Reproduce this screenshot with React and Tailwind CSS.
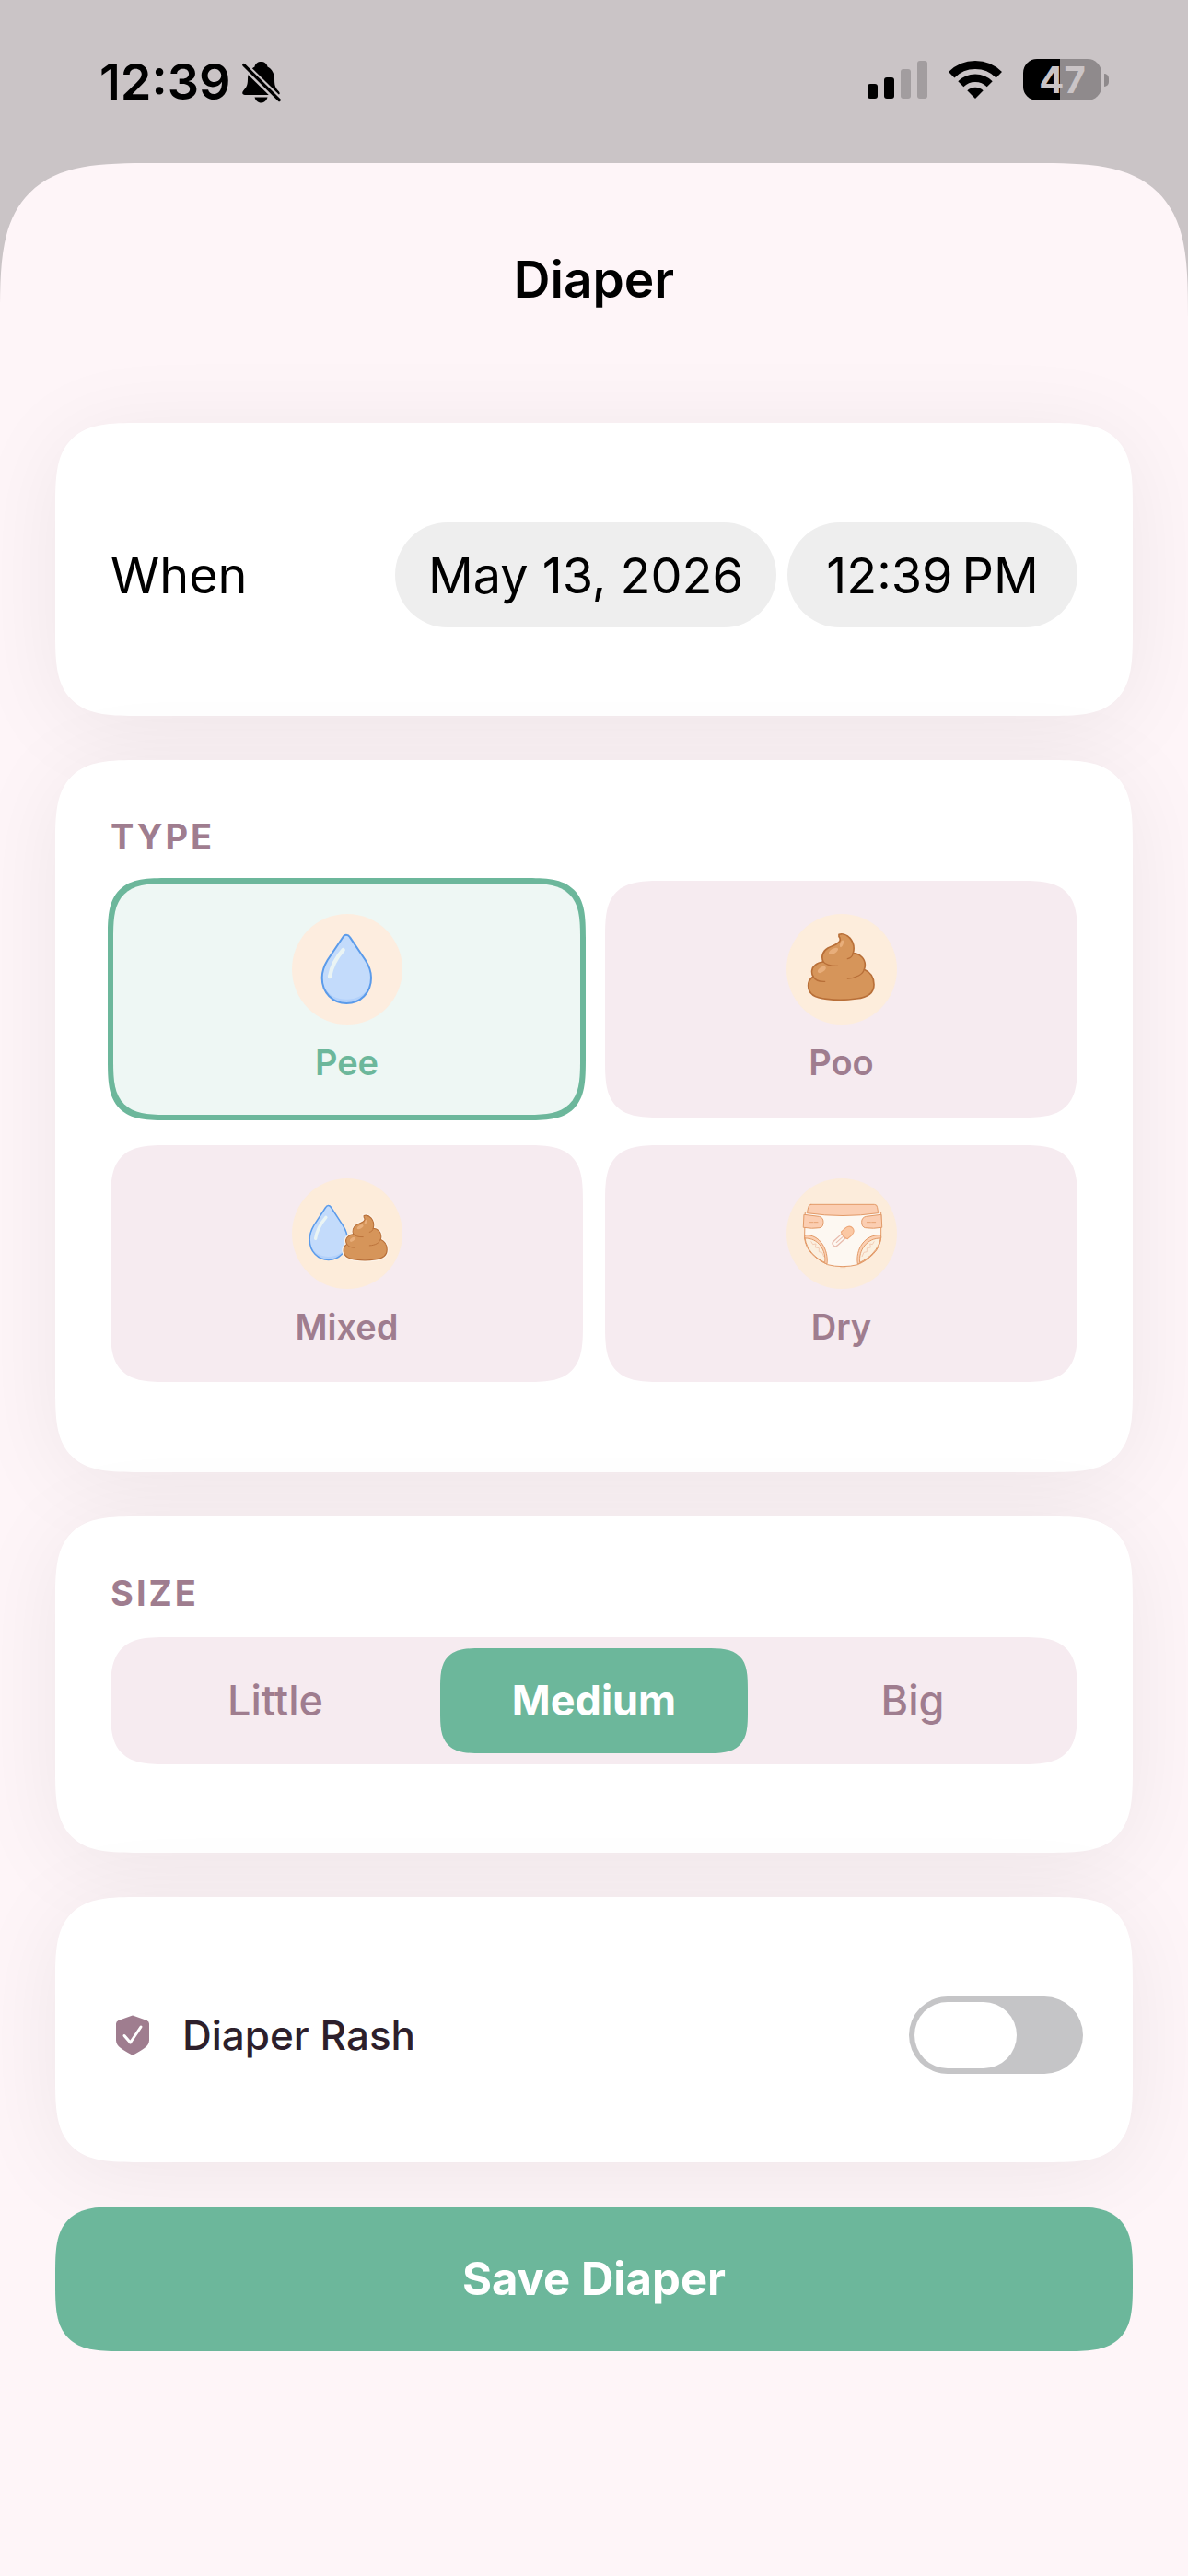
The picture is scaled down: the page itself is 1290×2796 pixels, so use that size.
import { useState } from "react";

const SMOOTH = "[corner-shape:superellipse(1.7)]";

function BellOff() {
  return (
    <svg viewBox="0 0 42 46" className="h-[46px] w-[42px]" aria-hidden="true">
      <path d="M20.500 1C24 1 27 3 27.500 6.500C32.500 9 35 14 35 20C35 29 37 30 40 33.500C41.500 35.500 40.500 37 38 37H3C.5 37-.5 35 .8 33C3.500 29.500 6 28 6 20C6 14 9 9 13.500 6.500C14 3 17 1 20.500 1Z" />
      <path d="M13.500 39.500H27.500C26.500 43 24 45.500 20.500 45.500S14.500 43 13.500 39.500Z" />
      <path d="M1.500 4.500L40.500 43" stroke="#cac4c6" strokeWidth="8" />
      <path d="M1.800 4.500L40.200 42.500" stroke="#000" strokeWidth="3.200" strokeLinecap="round" />
    </svg>
  );
}

function Signal() {
  return (
    <svg viewBox="0 0 65 42" className="h-[42px] w-[65px]" aria-hidden="true">
      <rect x="0" y="25" width="11" height="16" rx="3" />
      <rect x="18" y="18" width="11" height="23" rx="3" />
      <rect x="36" y="9" width="11" height="32" rx="3" fill="#a29d9f" />
      <rect x="54" y="0" width="11" height="41" rx="3" fill="#a29d9f" />
    </svg>
  );
}

function Wifi() {
  return (
    <svg viewBox="-29 -41 58 42" className="h-[42px] w-[58px]" aria-hidden="true">
      <g fill="none" stroke="#000">
        <path d="M-25.800-25.800A36.500 36.500 0 0 1 25.800-25.800" strokeWidth="9" />
        <path d="M-15.700-15.700A22.200 22.200 0 0 1 15.700-15.700" strokeWidth="8.500" />
      </g>
      <path d="M0 0L-8.700-8.700A12.300 12.300 0 0 1 8.700-8.700Z" />
    </svg>
  );
}

function Battery() {
  return (
    <div className="flex items-center gap-[3px]">
      <div className="flex h-[45px] w-[85px] items-center justify-center rounded-[15px] bg-[linear-gradient(to_right,#000_47%,#8f8a8c_47%)] text-[40px] font-bold leading-none text-[#cac4c6]">
        47
      </div>
      <div className="h-[14px] w-[5px] rounded-r-full bg-[#8f8a8c]" />
    </div>
  );
}

function DropShape() {
  return (
    <g>
      <path
        d="M229 134Q236 134 241 142L291 216C303 234 310 250 310 274C310 323 275 357 230 357C185 357 150 323 150 274C150 250 157 234 168 216L218 142Q222 134 229 134Z"
        fill="#c3dbfb"
      />
      <path d="M154 296C170 334 200 344 230 344S292 332 306 296C300 334 268 355 230 355S160 334 154 296Z" fill="#b3d1fa" />
      <path
        d="M229 134Q236 134 241 142L291 216C303 234 310 250 310 274C310 323 275 357 230 357C185 357 150 323 150 274C150 250 157 234 168 216L218 142Q222 134 229 134Z"
        fill="none"
        stroke="#5b9bea"
        strokeWidth="6"
      />
      <path d="M219 183C200 204 182 232 175 270" fill="none" stroke="#eaf4f4" strokeWidth="13" strokeLinecap="round" />
    </g>
  );
}

const SWIRL =
  "M243 133C254 129 269 134 279 145C291 159 294 176 289 194C311 195 328 211 328 232C328 239 327 243 325 247C346 256 357 275 357 296C357 322 336 338 300 342Q250 350 203 343C165 340 143 325 143 300C143 286 149 276 159 270C151 255 155 241 165 233C173 226 181 223 192 222C184 205 190 187 207 177C224 167 243 166 247 151Q247 144 243 140Z";

function SwirlShape() {
  return (
    <g strokeLinecap="round" strokeLinejoin="round">
      <path d={SWIRL} fill="#d6955a" stroke="#b86f38" strokeWidth="5" />
      <g fill="none" stroke="#b86f38" strokeWidth="4">
        <path d="M190 220C200 232 216 236 239 235" />
        <path d="M289 194C287 204 281 210 271 212" />
        <path d="M325 247C320 263 300 275 271 276" />
        <path d="M158 268C164 280 179 287 197 286" />
      </g>
      <g fill="#e8ae7b">
        <ellipse cx="225" cy="187" rx="17" ry="8" transform="rotate(-30 225 187)" />
        <ellipse cx="187" cy="247" rx="15" ry="8" transform="rotate(-35 187 247)" />
        <ellipse cx="252" cy="163" rx="5" ry="12" transform="rotate(20 252 163)" />
      </g>
    </g>
  );
}

function PeeIcon() {
  return (
    <svg viewBox="52 66 360 360" className="size-[120px]" aria-hidden="true">
      <circle cx="232" cy="246" r="180" fill="#fdeddf" />
      <DropShape />
    </svg>
  );
}

function PooIcon() {
  return (
    <svg viewBox="72 66 360 360" className="size-[120px]" aria-hidden="true">
      <circle cx="252" cy="246" r="180" fill="#fdeddc" />
      <SwirlShape />
    </svg>
  );
}

function MixedIcon() {
  return (
    <svg viewBox="52 57 360 360" className="size-[120px]" aria-hidden="true">
      <circle cx="232" cy="237" r="180" fill="#fdecda" />
      <g transform="translate(-6 39) scale(.77 .793)">
        <DropShape />
      </g>
      <g transform="translate(126 88) scale(.66 .68)">
        <path d={SWIRL} fill="none" stroke="#fdf3e8" strokeWidth="16" />
        <SwirlShape />
      </g>
    </svg>
  );
}

function DryIcon() {
  return (
    <svg viewBox="72 57 360 360" className="size-[120px]" aria-hidden="true">
      <circle cx="252" cy="237" r="180" fill="#fcecdb" />
      <g stroke="#e29a68" strokeWidth="3" strokeLinejoin="round" strokeLinecap="round">
        <path d="M134 167L380 167L380 250C374 290 345 320 304 338Q280 344 255 344Q228 344 206 338C165 318 137 290 131 250Z" fill="#fdf8f2" />
        <path d="M131 250C134 292 165 318 204 336C210 290 180 238 134 242Z" fill="#fbd0b3" />
        <path d="M132 252C138 290 165 316 197 331C202 292 176 250 132 252Z" fill="#fbf0e0" />
        <path d="M380 250C376 292 345 318 304 336C296 290 326 238 378 242Z" fill="#fbd0b3" />
        <path d="M379 252C372 290 342 316 311 331C306 292 334 250 379 252Z" fill="#fbf0e0" />
        <path d="M152 142H358Q367 142 368 152L371 170Q255 187 139 170L143 152Q144 142 152 142Z" fill="#fbceb2" />
        <path d="M130 175L178 181Q192 184 192 199Q192 216 180 218Q155 222 128 217Z" fill="#fbceb2" />
        <path d="M380 175L332 181Q317 184 317 199Q317 216 329 218Q355 222 382 217Z" fill="#fbceb2" />
        <path d="M146 200H176M334 200H362" fill="none" strokeDasharray="12 4" strokeWidth="2.500" />
        <path d="M248 347H264" fill="none" stroke="#f3c6a2" strokeWidth="2" />
      </g>
      <g fill="none" stroke="#f3cdb6" strokeWidth="3">
        <path d="M152 262L158 272L168 270L166 282L178 284L178 296L188 298L194 312" />
        <path d="M358 262L352 272L344 270L346 282L334 284L334 296L324 298L318 312" />
      </g>
      <g transform="rotate(-42 255 247)">
        <rect x="214" y="238" width="56" height="19" rx="9.500" fill="#fdf8f2" stroke="#e8bcae" strokeWidth="4" />
        <path d="M226 247.500H258" stroke="#e8bcae" strokeWidth="3" />
        <path d="M262 232H282Q298 234 298 247.500Q298 261 282 263H262Q254 247 262 232Z" fill="#fbc8a4" stroke="#eda779" strokeWidth="3" />
      </g>
    </svg>
  );
}

function Shield() {
  return (
    <svg viewBox="0 0 36 43" className="h-[44px] w-[36px]" aria-hidden="true">
      <path d="M16.500.5Q18-.3 19.500.5L33.500 5.500Q36 6.500 36 9V27C36 34 28 37.500 19.500 42.500Q18 43.300 16.500 42.500C8 37.500 0 34 0 27V9Q0 6.500 2.500 5.500Z" fill="#9f7d8f" />
      <path d="M9 22L15.500 29.500L27 12.500" fill="none" stroke="#fff" strokeWidth="3" strokeLinecap="round" strokeLinejoin="round" />
    </svg>
  );
}

function Card({ className, children }) {
  return (
    <section className={`rounded-[92px] bg-white px-[60px] shadow-[0_12px_100px_rgba(0,0,0,0.065)] ${SMOOTH} ${className}`}>
      {children}
    </section>
  );
}

function Heading({ children }) {
  return <h2 className="mb-6 text-[38px] font-bold leading-[47px] tracking-[3px] text-[#9f7d8f]">{children}</h2>;
}

const TYPES = [
  { name: "Pee", Icon: PeeIcon },
  { name: "Poo", Icon: PooIcon },
  { name: "Mixed", Icon: MixedIcon },
  { name: "Dry", Icon: DryIcon },
];

const SIZES = ["Little", "Medium", "Big"];

export default function App() {
  const [type, setType] = useState("Pee");
  const [size, setSize] = useState("Medium");
  const [rash, setRash] = useState(false);

  return (
    <div className="flex min-h-screen flex-col bg-[#cac4c6] font-['Inter',sans-serif] text-black">
      <header className="flex h-[177px] items-center justify-between pl-[108px] pr-[86px]">
        <div className="flex items-center gap-[12px]">
          <time className="text-[54px] font-semibold leading-none">12:39</time>
          <BellOff />
        </div>
        <div className="flex items-center gap-[23px] pb-[4px]">
          <Signal />
          <Wifi />
          <Battery />
        </div>
      </header>

      <main className={`flex-1 rounded-t-[168px] bg-[#fef5f8] px-[60px] pb-[200px] ${SMOOTH}`}>
        <h1 className="pb-[120px] pt-[90px] text-center text-[55px] font-semibold leading-[72px]">Diaper</h1>

        <form className="flex flex-col gap-[48px]" onSubmit={(e) => e.preventDefault()}>
          <Card className="flex items-center justify-between pb-[96px] pt-[108px]">
            <span className="text-[54px]">When</span>
            <div className="flex gap-[12px] text-[54px]">
              <button type="button" className="h-[114px] rounded-full bg-[#eeeeee] px-[36px]">May 13, 2026</button>
              <button type="button" className="h-[114px] min-w-[315px] rounded-full bg-[#eeeeee] px-[36px]">12:39{"\u2009"}PM</button>
            </div>
          </Card>

          <Card className="pb-[98px] pt-[60px]">
            <Heading>TYPE</Heading>
            <div className="grid grid-cols-2 gap-x-[24px] gap-y-[30px]">
              {TYPES.map(({ name, Icon }) => (
                <button
                  key={name}
                  type="button"
                  aria-pressed={type === name}
                  onClick={() => setType(name)}
                  className={`flex flex-col items-center gap-[18px] rounded-[64px] py-[36px] ${SMOOTH} ${
                    type === name
                      ? "bg-[#eef7f4] text-[#6cb79b] outline-[6px] -outline-offset-[3px] outline-[#6cb79b]"
                      : "bg-[#f6ebf0] text-[#9f7d8f]"
                  }`}
                >
                  <Icon />
                  <span className="text-[38px] font-semibold leading-[47px]">{name}</span>
                </button>
              ))}
            </div>
          </Card>

          <Card className="pb-[96px] pt-[60px]">
            <Heading>SIZE</Heading>
            <div className={`grid grid-cols-3 gap-[12px] rounded-[64px] bg-[#f6ebf0] p-[12px] ${SMOOTH}`}>
              {SIZES.map((name) => (
                <button
                  key={name}
                  type="button"
                  aria-pressed={size === name}
                  onClick={() => setSize(name)}
                  className={`h-[114px] rounded-[46px] text-[45px] ${SMOOTH} ${
                    size === name ? "bg-[#6cb79b] font-bold text-white" : "font-medium text-[#9f7d8f]"
                  }`}
                >
                  {name}
                </button>
              ))}
            </div>
          </Card>

          <Card className="pb-[96px] pt-[108px]">
            <label className="-mr-[6px] ml-[6px] flex items-center">
              <Shield />
              <span className="ml-[36px] flex-1 text-[44px] font-medium leading-[60px] text-[#2d1f2b]">Diaper Rash</span>
              <input
                type="checkbox"
                role="switch"
                checked={rash}
                onChange={(e) => setRash(e.target.checked)}
                className="flex h-[84px] w-[189px] appearance-none items-center rounded-full bg-[#c5c5c7] px-[6px] before:h-[72px] before:w-[111px] before:rounded-full before:bg-white before:content-[''] checked:justify-end checked:bg-[#6cb79b]"
              />
            </label>
          </Card>

          <button type="submit" className={`h-[157px] rounded-[74px] bg-[#6cb79b] text-[49px] font-bold text-white ${SMOOTH}`}>
            Save Diaper
          </button>
        </form>
      </main>
    </div>
  );
}
